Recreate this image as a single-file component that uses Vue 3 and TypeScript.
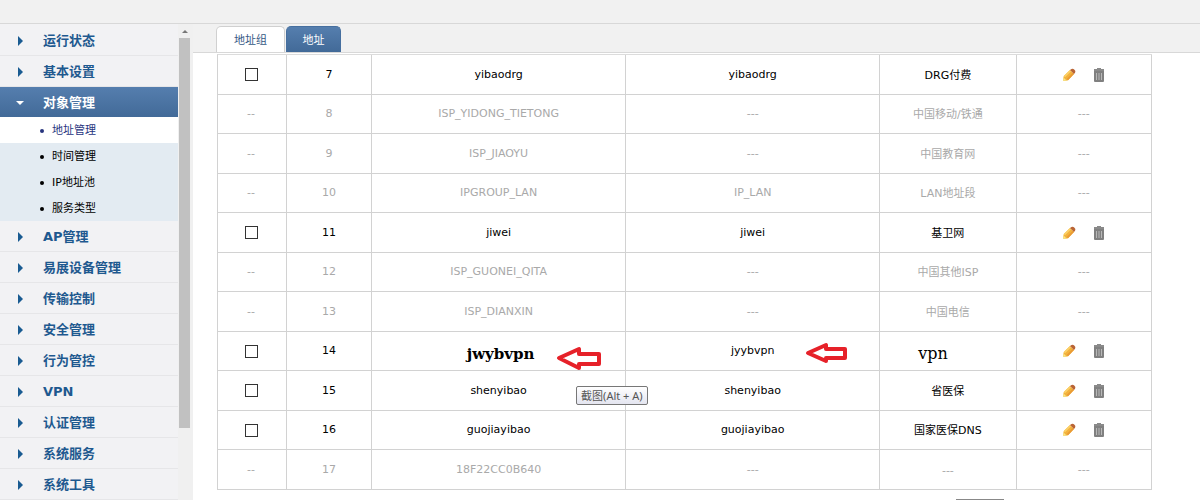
<script setup lang="ts">
import { ref } from 'vue'

interface MenuItem {
  label: string
  children?: string[]
}

interface AddressRow {
  id: number
  name: string
  group: string
  note: string
  editable: boolean
  marked?: boolean
  tip?: string
}

const menu: MenuItem[] = [
  { label: '运行状态' },
  { label: '基本设置' },
  { label: '对象管理', children: ['地址管理', '时间管理', 'IP地址池', '服务类型'] },
  { label: 'AP管理' },
  { label: '易展设备管理' },
  { label: '传输控制' },
  { label: '安全管理' },
  { label: '行为管控' },
  { label: 'VPN' },
  { label: '认证管理' },
  { label: '系统服务' },
  { label: '系统工具' },
]

const rows: AddressRow[] = [
  { id: 7, name: 'yibaodrg', group: 'yibaodrg', note: 'DRG付费', editable: true },
  { id: 8, name: 'ISP_YIDONG_TIETONG', group: '---', note: '中国移动/铁通', editable: false },
  { id: 9, name: 'ISP_JIAOYU', group: '---', note: '中国教育网', editable: false },
  { id: 10, name: 'IPGROUP_LAN', group: 'IP_LAN', note: 'LAN地址段', editable: false },
  { id: 11, name: 'jiwei', group: 'jiwei', note: '基卫网', editable: true },
  { id: 12, name: 'ISP_GUONEI_QITA', group: '---', note: '中国其他ISP', editable: false },
  { id: 13, name: 'ISP_DIANXIN', group: '---', note: '中国电信', editable: false },
  { id: 14, name: 'jwybvpn', group: 'jyybvpn', note: 'vpn', editable: true, marked: true },
  { id: 15, name: 'shenyibao', group: 'shenyibao', note: '省医保', editable: true, tip: '截图(Alt + A)' },
  { id: 16, name: 'guojiayibao', group: 'guojiayibao', note: '国家医保DNS', editable: true },
  { id: 17, name: '18F22CC0B640', group: '---', note: '---', editable: false },
]

const selected = ref<number[]>([])
const activeChild = ref('地址管理')
</script>

<template>
  <div class="page">
    <header class="top"></header>
    <div class="body">
      <nav class="sidebar">
        <ul class="menu">
          <li v-for="item in menu" :key="item.label">
            <a href="#" class="item" :class="{ open: item.children }">
              <svg v-if="item.children" class="caret" viewBox="0 0 10 10" aria-hidden="true"><path d="M1 3h8L5 7z" /></svg>
              <svg v-else class="caret" viewBox="0 0 10 10" aria-hidden="true"><path d="M3 0v10l5-5z" /></svg>
              <span>{{ item.label }}</span>
            </a>
            <ul v-if="item.children" class="sub">
              <li v-for="child in item.children" :key="child">
                <a href="#" class="child" :class="{ current: child === activeChild }" @click.prevent="activeChild = child">
                  <i class="dot"></i>{{ child }}
                </a>
              </li>
            </ul>
          </li>
        </ul>
      </nav>
      <div class="scrollbar" aria-hidden="true">
        <svg class="up" viewBox="0 0 12 14"><path d="M3 9h6L6 6z" /></svg>
        <div class="thumb"></div>
      </div>

      <main class="main">
        <div class="tabs" role="tablist">
          <button type="button" role="tab" class="tab" aria-selected="false">地址组</button>
          <button type="button" role="tab" class="tab active" aria-selected="true">地址</button>
        </div>
        <div class="content">
          <table class="grid">
            <colgroup>
              <col class="c-check" /><col class="c-id" /><col class="c-name" /><col class="c-name" /><col class="c-note" /><col class="c-ops" />
            </colgroup>
            <tbody>
              <tr v-for="row in rows" :key="row.id" :class="{ locked: !row.editable, marked: row.marked }">
                <td class="pick">
                  <input v-if="row.editable" v-model="selected" type="checkbox" class="check" :value="row.id" :aria-label="row.name" />
                  <template v-else>--</template>
                </td>
                <td>{{ row.id }}</td>
                <td class="name">
                  <span>{{ row.name }}</span>
                  <svg v-if="row.marked" class="arrow first" viewBox="0 0 45 24" aria-hidden="true"><path d="M3 12 L23 3 V8 H43 V18 H23 V22 Z" /></svg>
                  <div v-if="row.tip" class="tip" role="tooltip">{{ row.tip }}</div>
                </td>
                <td class="group">
                  {{ row.group }}
                  <svg v-if="row.marked" class="arrow second" viewBox="0 0 43 22" aria-hidden="true"><path d="M3 11 L21 3 V7 H40 V16 H21 V19 Z" /></svg>
                </td>
                <td class="note">{{ row.note }}</td>
                <td>
                  <div v-if="row.editable" class="ops">
                    <button type="button" class="icon" aria-label="编辑">
                      <svg viewBox="0 0 14 14">
                        <path d="M1 13 L1.800 8 L6 12.200 Z" fill="#f4e3a0" />
                        <path d="M1.800 8 L8 2 L12 6 L6 12.200 L1 13 Z" fill="#f3b23c" />
                        <path d="M1.800 8 L8 2 L9.200 3.200 L3 9.300 Z" fill="#fbd168" />
                        <path d="M4.700 11 L10.800 4.800 L12 6 L6 12.200 Z" fill="#e99a35" />
                        <path d="M1 13 L1.600 9.500 L4.500 12.400 Z" fill="#f7e58a" />
                        <path d="M8 2 L9.500 1 Q11 .3 12.200 1.500 L13 2.500 Q13.800 3.500 13 4.700 L12 6 Z" fill="#b96435" />
                      </svg>
                    </button>
                    <button type="button" class="icon" aria-label="删除">
                      <svg viewBox="0 0 14 14">
                        <path d="M5 1 V0 H9 V1 H12 V3 H2 V1 Z" fill="#8a8a8a" />
                        <path d="M2 3 H12 V13 Q12 14 11 14 H3 Q2 14 2 13 Z" fill="#808080" />
                        <path d="M4.500 5 V12 M7 5 V12 M9.500 5 V12" stroke="#b8b8b8" fill="none" />
                      </svg>
                    </button>
                  </div>
                  <template v-else>---</template>
                </td>
              </tr>
            </tbody>
          </table>
          <div class="footer"><button type="button" class="more" aria-label="更多"></button></div>
        </div>
      </main>
    </div>
  </div>
</template>

<style>
body {
  margin: 0;
  overflow: hidden;
}
</style>

<style scoped>
.page {
  display: flex;
  flex-direction: column;
  height: 100vh;
  overflow: hidden;
  background: #fff;
  color: #000;
  font: 11px/16px "DejaVu Sans", "Noto Sans CJK SC", sans-serif;
}
.top {
  flex: 0 0 23px;
  background: #f1f1f1;
  border-bottom: 1px solid #d8d8d8;
}
.body {
  display: flex;
  flex: 1;
  min-height: 0;
}
.sidebar {
  flex: 0 0 178px;
  overflow: hidden;
  background: #f2f2f4;
}
ul {
  margin: 0;
  padding: 0;
  list-style: none;
}
.menu {
  padding-top: 1px;
}
a {
  text-decoration: none;
}
.item {
  display: flex;
  align-items: center;
  gap: 18px;
  box-sizing: border-box;
  height: 31px;
  padding-left: 15px;
  padding-top: 2px;
  border-bottom: 1px solid #e6e6e8;
  color: #1e598f;
  font-size: 13px;
  font-weight: bold;
}
.item.open {
  height: 30px;
  background: linear-gradient(#557eae, #426a98);
  border-bottom: 0;
  color: #fff;
}
.caret {
  width: 10px;
  height: 10px;
  fill: #195b91;
}
.open .caret {
  fill: #fff;
}
.sub {
  background: #e3ebf2;
}
.child {
  display: flex;
  align-items: center;
  gap: 8px;
  box-sizing: border-box;
  height: 26px;
  padding-left: 40px;
  padding-top: 1px;
  color: #000;
}
.child.current {
  background: #fff;
  color: #27357e;
}
.dot {
  width: 4px;
  height: 4px;
  border-radius: 50%;
  background: currentColor;
}
.scrollbar {
  display: flex;
  flex-direction: column;
  flex: 0 0 15px;
  box-sizing: border-box;
  padding-left: 1px;
  background: #f0f0f0;
}
.up {
  width: 12px;
  height: 14px;
  fill: #777;
}
.thumb {
  width: 11px;
  height: 82%;
  background: #c1c1c1;
}
.main {
  flex: 1;
  min-width: 0;
}
.tabs {
  display: flex;
  align-items: flex-end;
  gap: 1px;
  height: 28px;
  padding-left: 23px;
  background: #f1f1f1;
  border-bottom: 1px solid #d8d8d8;
}
.tab {
  box-sizing: border-box;
  width: 69px;
  height: 26px;
  padding: 3px 0 0;
  border: 1px solid #d0d0d0;
  border-bottom: 0;
  border-radius: 5px 5px 0 0;
  background: #fff;
  color: #355984;
  font: inherit;
}
.tab.active {
  width: 55px;
  border-color: #466f9f;
  background: linear-gradient(#557eae, #426a98);
  color: #fff;
}
.content {
  padding: 1px 48px 0 24px;
}
.grid {
  width: 100%;
  table-layout: fixed;
  border-collapse: separate;
  border-spacing: 0;
  border-left: 1px solid #d2d2d2;
  border-top: 1px solid #dcdcdc;
}
.c-check {
  width: 7.4%;
}
.c-id {
  width: 9.1%;
}
.c-name {
  width: 27.2%;
}
.c-note {
  width: 14.6%;
}
.grid td {
  position: relative;
  box-sizing: border-box;
  height: 40px;
  padding: 0;
  border-right: 1px solid #d2d2d2;
  border-bottom: 1px solid #d2d2d2;
  text-align: center;
  vertical-align: middle;
}
.grid tr:nth-child(even) td {
  height: 39px;
}
.grid .pick {
  padding-right: 2px;
}
.grid .note {
  padding-top: 2px;
}
.locked td {
  color: #a9a9a9;
}
.check {
  display: block;
  appearance: none;
  width: 13px;
  height: 13px;
  margin: 0 auto;
  border: 1px solid #333;
  background: #fff;
}
.check:checked {
  background: #456e9d;
}
.marked .name span {
  display: block;
  padding: 6px 0 0 4px;
  font: bold 15px/18px "DejaVu Serif", serif;
}
.grid .marked .note {
  padding: 6px 0 0 38px;
  text-align: left;
  font: 16px/18px "DejaVu Serif", serif;
}
.arrow {
  position: absolute;
  fill: #fff;
  stroke: #e62129;
  stroke-width: 4;
  stroke-linejoin: round;
}
.first {
  left: 184px;
  top: 14px;
  width: 45px;
  height: 24px;
}
.second {
  left: 179px;
  top: 10px;
  width: 43px;
  height: 22px;
}
.tip {
  position: absolute;
  z-index: 1;
  left: 204px;
  top: 15px;
  padding: 0 4px;
  border: 1px solid #777;
  border-radius: 2px;
  background: linear-gradient(#fff, #e4e5f0);
  color: #555;
  font: 11px/17px "Noto Sans", "Noto Sans CJK SC", sans-serif;
  white-space: nowrap;
}
.ops {
  display: flex;
  justify-content: center;
  gap: 16px;
}
.icon {
  width: 14px;
  height: 14px;
  padding: 0;
  border: 0;
  background: none;
}
.icon svg {
  display: block;
  width: 14px;
  height: 14px;
}
.footer {
  display: flex;
  justify-content: flex-end;
  padding: 9px 148px 0 0;
}
.more {
  width: 48px;
  height: 20px;
  border: 1px solid #888;
  background: #eee;
}
</style>
